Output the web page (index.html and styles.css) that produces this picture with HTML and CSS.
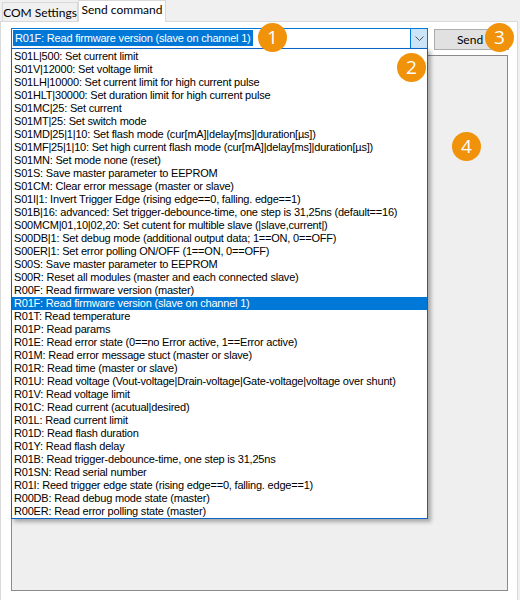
FILE: index.html
```html
<!DOCTYPE html>
<html lang="en">
<head>
    <meta charset="UTF-8">
    <title>Send command</title>
    <link rel="stylesheet" href="styles.css">
</head>
<body>
    <!-- Tab strip -->
    <div class="tabs">
        <div class="tab">COM Settings</div>
        <div class="tab active">Send command</div>
    </div>

    <div class="page">
        <div class="cmd-row">
            <div class="combo">
                <div class="combo-text"><span class="sel">R01F: Read firmware version (slave on channel 1)</span></div>
                <div class="combo-btn">
                    <svg width="9" height="5" viewBox="0 0 9 5"><path d="M0.5 0.5 L4.5 4.5 L8.5 0.5" fill="none" stroke="#555" stroke-width="1"/></svg>
                </div>

                <!-- Open dropdown list -->
                <ul class="drop">
                    <li>S01L|500: Set current limit</li>
                    <li>S01V|12000: Set voltage limit</li>
                    <li>S01LH|10000: Set current limit for high current pulse</li>
                    <li>S01HLT|30000: Set duration limit for high current pulse</li>
                    <li>S01MC|25: Set current</li>
                    <li>S01MT|25: Set switch mode</li>
                    <li>S01MD|25|1|10: Set flash mode (cur[mA]|delay[ms]|duration[µs])</li>
                    <li>S01MF|25|1|10: Set high current flash mode (cur[mA]|delay[ms]|duration[µs])</li>
                    <li>S01MN: Set mode none (reset)</li>
                    <li>S01S: Save master parameter to EEPROM</li>
                    <li>S01CM: Clear error message (master or slave)</li>
                    <li>S01I|1: Invert Trigger Edge (rising edge==0, falling. edge==1)</li>
                    <li>S01B|16: advanced: Set trigger-debounce-time, one step is 31,25ns (default==16)</li>
                    <li>S00MCM|01,10|02,20: Set cutent for multible slave (|slave,current|)</li>
                    <li>S00DB|1: Set debug mode (additional output data; 1==ON, 0==OFF)</li>
                    <li>S00ER|1: Set error polling ON/OFF (1==ON, 0==OFF)</li>
                    <li>S00S: Save master parameter to EEPROM</li>
                    <li>S00R: Reset all modules (master and each connected slave)</li>
                    <li>R00F: Read firmware version (master)</li>
                    <li class="selected">R01F: Read firmware version (slave on channel 1)</li>
                    <li>R01T: Read temperature</li>
                    <li>R01P: Read params</li>
                    <li>R01E: Read error state (0==no Error active, 1==Error active)</li>
                    <li>R01M: Read error message stuct (master or slave)</li>
                    <li>R01R: Read time (master or slave)</li>
                    <li>R01U: Read voltage (Vout-voltage|Drain-voltage|Gate-voltage|voltage over shunt)</li>
                    <li>R01V: Read voltage limit</li>
                    <li>R01C: Read current (acutual|desired)</li>
                    <li>R01L: Read current limit</li>
                    <li>R01D: Read flash duration</li>
                    <li>R01Y: Read flash delay</li>
                    <li>R01B: Read trigger-debounce-time, one step is 31,25ns</li>
                    <li>R01SN: Read serial number</li>
                    <li>R01I: Reed trigger edge state (rising edge==0, falling. edge==1)</li>
                    <li>R00DB: Read debug mode state (master)</li>
                    <li>R00ER: Read error polling state (master)</li>
                </ul>
            </div>
            <button class="send">Send</button>
        </div>

        <div class="output"></div>
    </div>

    <!-- Numbered callouts -->
    <div class="badge b1">1</div>
    <div class="badge b2">2</div>
    <div class="badge b3">3</div>
    <div class="badge b4">4</div>
</body>
</html>
```

FILE: styles.css
```css
body {
    margin: 0;
    background-color: #f0f0f0;
    font-family: "Liberation Sans", Arial, sans-serif;
    position: relative;
    height: 600px;
    overflow: hidden;
}

.tabs {
    display: flex;
    align-items: flex-end;
    height: 21px;
    padding-left: 2px;
}

.tab {
    font-family: Lato, "Open Sans", sans-serif;
    font-size: 12px;
    height: 19px;
    line-height: 19px;
    border: 1px solid #d9d9d9;
    border-bottom: none;
    background-color: #f0f0f0;
    color: #000;
    box-sizing: border-box;
    width: 76px;
    text-align: center;
    white-space: nowrap;
}

.tab.active {
    background-color: #fff;
    height: 22px;
    line-height: 18px;
    width: 88px;
    margin-bottom: -1px;
    position: relative;
    z-index: 1;
}

.page {
    background-color: #fff;
    border: 1px solid #d9d9d9;
    margin-right: 2px;
    height: 600px;
    padding: 6px 0 0 10px;
}

.cmd-row {
    display: flex;
    align-items: flex-start;
    gap: 6px;
}

.combo {
    position: relative;
    width: 417px;
    height: 21px;
    border: 1px solid #0078d7;
    box-sizing: border-box;
    display: flex;
    background-color: #fff;
}

.combo-text {
    flex: 1;
    padding: 1px 0 0 1px;
    font-size: 11px;
    line-height: 15px;
    letter-spacing: -0.2px;
}

.sel {
    display: inline-block;
    background-color: #0078d7;
    color: #fff;
    padding: 0 2px 0 2px;
    height: 16px;
    line-height: 16px;
}

.combo-btn {
    width: 16px;
    background-color: #cce4f7;
    border-left: 1px solid #0078d7;
    display: flex;
    align-items: center;
    justify-content: center;
}

.drop {
    position: absolute;
    top: 19px;
    left: -1px;
    width: 417px;
    box-sizing: border-box;
    margin: 0;
    padding: 1px 0 0 0;
    list-style: none;
    background-color: #fff;
    border: 1px solid #0a64c8;
    box-shadow: 3px 3px 4px rgba(0, 0, 0, 0.3);
    z-index: 5;
}

.drop li {
    height: 13px;
    line-height: 13px;
    font-size: 11px;
    letter-spacing: -0.2px;
    padding-left: 2px;
    white-space: nowrap;
    color: #000;
}

.drop li.selected {
    background-color: #0078d7;
    color: #fff;
}

.send {
    width: 75px;
    height: 21px;
    margin-top: 1px;
    background-color: #e1e1e1;
    border: 1px solid #adadad;
    font-family: Lato, "Open Sans", sans-serif;
    font-size: 12px;
    padding: 0 3px 0 0;
    color: #000;
}

.output {
    width: 497px;
    height: 536px;
    margin-top: 5px;
    box-sizing: border-box;
    border: 1px solid #8a8a8a;
    background-color: #efefef;
}

.badge {
    position: absolute;
    width: 29px;
    height: 29px;
    border-radius: 50%;
    background-color: #f0920a;
    color: #fff;
    font-family: "Open Sans", "Noto Sans", sans-serif;
    font-size: 19px;
    line-height: 29px;
    text-align: center;
    z-index: 10;
}

.b1 { left: 258px; top: 23px; }
.b2 { left: 397px; top: 53px; }
.b3 { left: 485px; top: 23px; }
.b4 { left: 452px; top: 132px; }
```
